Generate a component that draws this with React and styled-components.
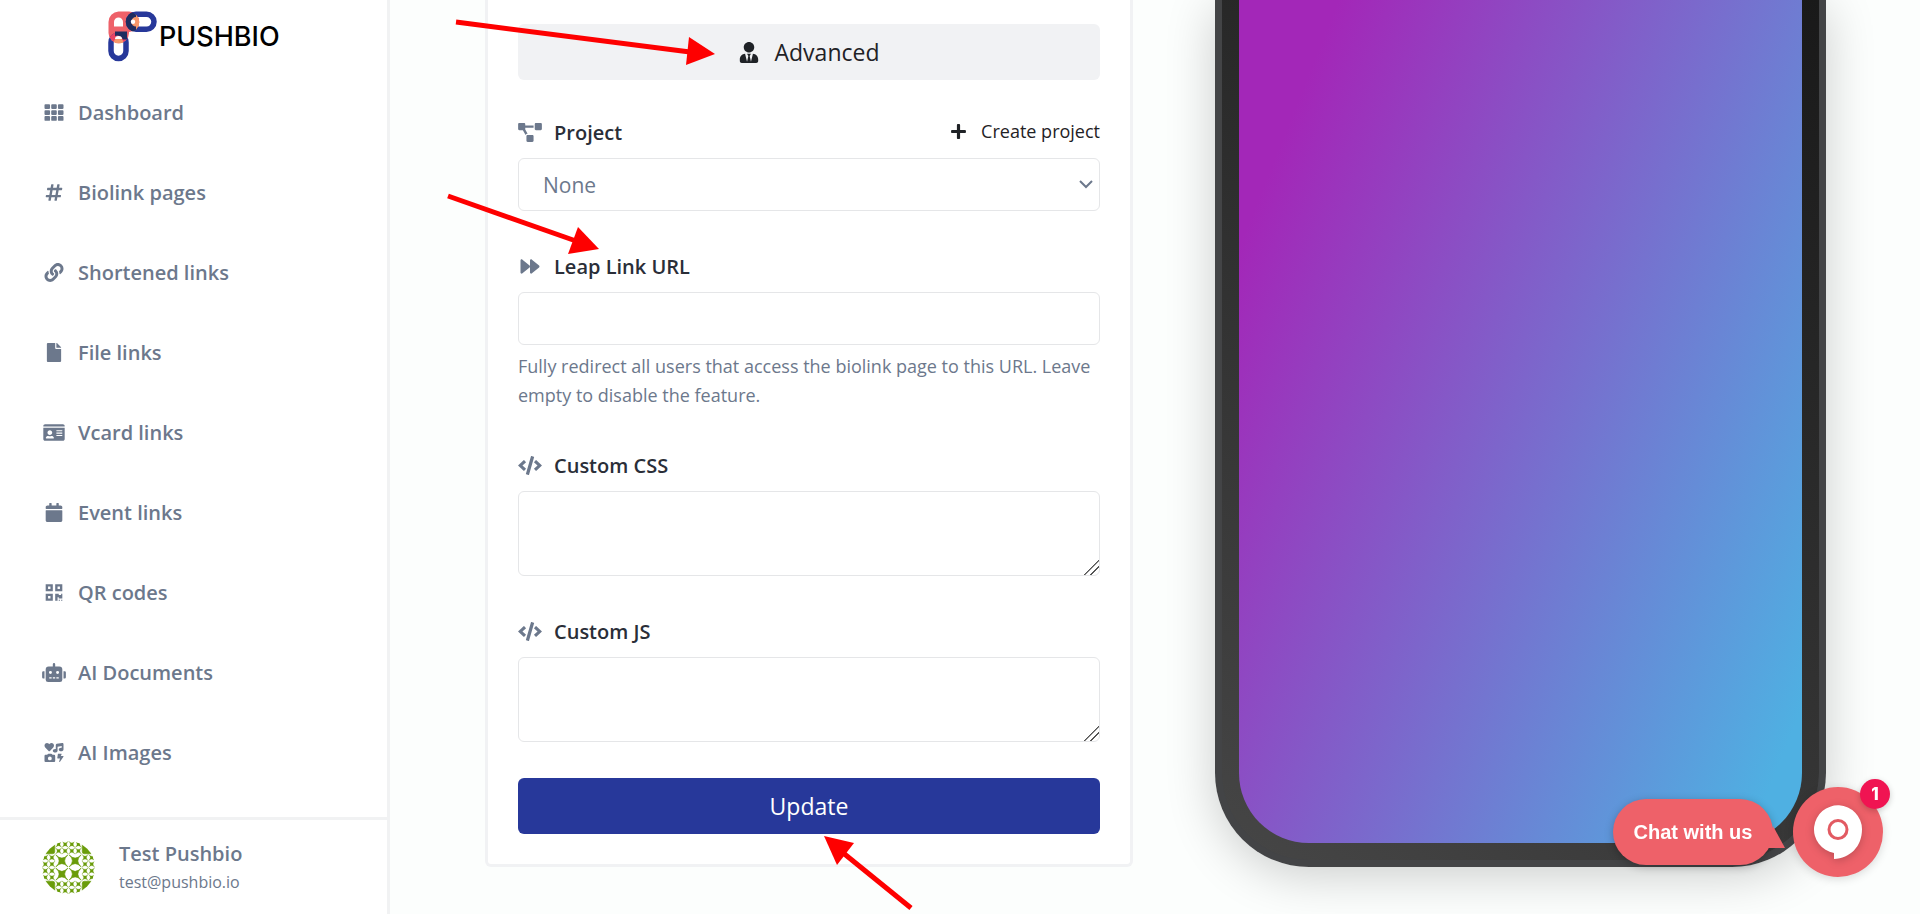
import React from 'react';
import styled, { createGlobalStyle } from 'styled-components';
import {
  FaCalendar,
  FaCode,
  FaFile,
  FaForward,
  FaHashtag,
  FaIcons,
  FaIdCard,
  FaLink,
  FaPlus,
  FaProjectDiagram,
  FaQrcode,
  FaRobot,
  FaTh,
  FaUserTie,
} from 'react-icons/fa';

const GlobalStyle = createGlobalStyle`
  *, *::before, *::after {
    box-sizing: border-box;
  }
  body {
    margin: 0;
    background-color: #fcfefd;
    color: #2a2e38;
    font-family: "Segoe UI", "Open Sans", "Noto Sans", sans-serif;
    font-size: 20px;
  }
  input, select, textarea, button {
    font-family: inherit;
  }
`;

const Page = styled.div`
  display: grid;
  grid-template-columns: 390px minmax(0, 1fr);
  height: 100vh;
  overflow: hidden;
`;

const Sidebar = styled.aside`
  display: flex;
  flex-direction: column;
  background-color: white;
  border-right: 3px solid #f1f2f3;
`;

const Brand = styled.a`
  display: flex;
  align-items: center;
  gap: 1px;
  height: 72px;
  padding-left: 107px;
  color: black;
  font-family: Inter, sans-serif;
  font-size: 27px;
  font-weight: 500;
  text-decoration: none;
`;

const Nav = styled.nav`
  flex: 1;
  display: grid;
  grid-auto-rows: 1fr;
  padding-bottom: 24px;
`;

const NavLink = styled.a`
  display: flex;
  align-items: center;
  gap: 12px;
  padding-left: 42px;
  color: #6c788c;
  font-weight: 600;
  text-decoration: none;
`;

const Icon = styled.span`
  display: flex;
  flex-shrink: 0;
  color: ${props => props.$color || '#6c788c'};
  svg {
    width: ${props => props.$width || '24px'};
    height: ${props => props.$size || '19px'};
  }
`;

const User = styled.a`
  display: flex;
  align-items: center;
  gap: 24px;
  height: 97px;
  padding-left: 42px;
  border-top: 3px solid #f1f2f3;
  color: #6c788c;
  text-decoration: none;
`;

const UserName = styled.div`
  font-weight: 600;
  line-height: 30px;
`;

const UserMail = styled.div`
  font-size: 16px;
  line-height: 26px;
`;

const Main = styled.main`
  position: relative;
  display: grid;
  grid-template-columns: 35fr 33fr;
  column-gap: 82px;
  align-content: start;
  padding: 0 94px 0 95px;
`;

const Card = styled.form`
  padding: 24px 30px 30px;
  background-color: white;
  border: 3px solid #f1f2f4;
  border-top: none;
  border-radius: 0 0 6px 6px;
`;

const Button = styled.button`
  display: flex;
  align-items: center;
  justify-content: center;
  gap: 16px;
  width: 100%;
  height: 56px;
  border: none;
  border-radius: 6px;
  background-color: ${props => (props.$primary ? '#27389a' : '#f1f2f4')};
  color: ${props => (props.$primary ? 'white' : '#1f2226')};
  font-size: 23px;
  cursor: pointer;
`;

const Group = styled.div`
  margin: ${props => (props.$first ? '36px' : '39px')} 0 0;
`;

const Actions = styled.div`
  margin-top: 36px;
`;

const LabelRow = styled.div`
  display: flex;
  justify-content: space-between;
  height: 33px;
  margin-bottom: 9px;
`;

const Label = styled.label`
  display: flex;
  align-items: center;
  gap: 12px;
  font-weight: 600;
`;

const CreateLink = styled.a`
  display: flex;
  align-items: center;
  gap: 14px;
  height: 30px;
  color: #1f2226;
  font-size: 18px;
  text-decoration: none;
`;

const SelectBox = styled.div`
  position: relative;
  svg {
    position: absolute;
    top: 22px;
    right: 7px;
    pointer-events: none;
  }
`;

const Select = styled.select`
  display: block;
  width: 100%;
  height: 53px;
  padding: 0 24px;
  appearance: none;
  background-color: white;
  border: 1px solid #e5e6e8;
  border-radius: 6px;
  color: #6c788c;
  font-size: 21px;
`;

const Input = styled.input`
  display: block;
  width: 100%;
  height: 53px;
  padding: 0 24px;
  border: 1px solid #e5e6e8;
  border-radius: 6px;
  font-size: 21px;
`;

const TextArea = styled.textarea`
  display: block;
  width: 100%;
  height: 85px;
  padding: 12px 24px;
  border: 1px solid #e5e6e8;
  border-radius: 6px;
  font-size: 21px;
  resize: vertical;
  &::-webkit-resizer {
    background: linear-gradient(
      135deg,
      transparent 47%,
      #555 48%,
      #555 53%,
      transparent 54%,
      transparent 69%,
      #555 70%,
      #555 75%,
      transparent 76%
    );
  }
`;

const Help = styled.p`
  margin: 7px 0 0;
  color: #6c788c;
  font-size: 18px;
  line-height: 29px;
`;

const Phone = styled.div`
  display: flex;
  padding: 0 17px 17px;
  border: 7px solid #434446;
  border-top: none;
  border-radius: 0 0 94px 94px;
  background:
    linear-gradient(35deg, #464646, #191919) padding-box,
    linear-gradient(#434446, #434446) border-box;
  box-shadow: 0 8px 50px rgba(0, 0, 0, 0.2);
`;

const Screen = styled.div`
  flex: 1;
  border-radius: 0 0 70px 70px;
  background: linear-gradient(112deg, #a327b8 11%, #4fb0e2 94%);
`;

const Arrow = styled.svg`
  position: absolute;
  top: 0;
  left: 0;
  overflow: visible;
  pointer-events: none;
  line {
    stroke: #fe0000;
    stroke-width: 5;
  }
  polygon {
    fill: #fe0000;
  }
`;

const Chat = styled.div`
  position: fixed;
  right: 37px;
  bottom: 37px;
  display: flex;
  align-items: center;
  gap: 20px;
`;

const ChatText = styled.button`
  position: relative;
  width: 160px;
  height: 66px;
  padding: 0;
  border: none;
  border-radius: 33px;
  background-color: #ee6169;
  box-shadow: 0 2px 8px rgba(0, 0, 0, 0.25);
  color: white;
  font-family: "Liberation Sans", Arial, sans-serif;
  font-size: 20px;
  font-weight: 700;
  svg {
    position: absolute;
    right: -12px;
    bottom: 17px;
  }
`;

const ChatButton = styled.button`
  position: relative;
  width: 90px;
  height: 90px;
  padding: 0;
  border: none;
  border-radius: 50%;
  background-color: #ee6169;
  box-shadow: 0 2px 10px rgba(0, 0, 0, 0.15);
  & > svg {
    display: block;
    filter: drop-shadow(0 2px 4px rgba(0, 0, 0, 0.2));
  }
`;

const Badge = styled.span`
  position: absolute;
  top: -8px;
  right: -7px;
  width: 30px;
  height: 30px;
  border-radius: 50%;
  background-color: #f01452;
  box-shadow: 0 2px 6px rgba(0, 0, 0, 0.2);
  color: white;
  font-family: Inter, sans-serif;
  font-size: 17px;
  font-weight: 800;
  line-height: 31px;
  text-align: center;
`;

const LogoMark = () => (
  <svg width="51" height="51" viewBox="0 0 51 51" aria-hidden="true">
    <defs>
      <clipPath id="logo-red">
        <path d="M11.5 1H22a10.25 10.25 0 0 1 0 20.5V22a10.25 10.25 0 0 1-20.5 0V11.500A10.400 10.400 0 0 1 11.5 1Z" />
      </clipPath>
    </defs>
    <path
      fill="#ee6169"
      fillRule="evenodd"
      d="M11.5 .5H22a10.25 10.25 0 0 1 0 20.500V22a10.25 10.25 0 0 1-20.5 0V11A10.400 10.400 0 0 1 11.5 .5ZM11.500 6.500a4.500 4.500 0 0 0-4.500 4.500V15.500H16V11A4.500 4.500 0 0 0 11.500 6.500Z"
    />
    <rect x="21.500" y="3.300" width="25.500" height="15" rx="7.500" fill="none" stroke="#27389a" strokeWidth="5.500" />
    <rect x="4" y="24" width="15" height="23.500" rx="7.500" fill="none" stroke="#27389a" strokeWidth="5.500" />
    <g clipPath="url(#logo-red)">
      <rect x="21.500" y="3.300" width="25.500" height="15" rx="7.500" fill="#f7976b" stroke="#1f2d60" strokeWidth="5.500" />
      <path d="M29 0a12 12 0 0 1 0 22Z" fill="#f7976b" />
      <rect x="4" y="24" width="15" height="23.500" rx="7.500" fill="#f7976b" stroke="#ea4463" strokeWidth="5.500" />
      <path d="M8 20.500H20V28.500H16A6 6 0 0 0 8 25Z" fill="#1f2d60" />
      <circle cx="26" cy="10.800" r="2.200" fill="#fff" />
      <path d="M8 28a3.500 3 0 0 1 7 0Z" fill="#fff" />
    </g>
  </svg>
);

const STAR =
  'M0.600 0.600Q6.500 7 12.400 0.600Q6 6.500 12.400 12.400Q6.500 6 0.600 12.400Q7 6.500 0.600 0.600Z';

const Avatar = () => {
  const cells = [];
  for (let row = 0; row < 4; row++) {
    for (let col = 0; col < 4; col++) {
      const x = col * 13;
      const y = row * 13;
      const edgeX = col === 0 || col === 3;
      const edgeY = row === 0 || row === 3;
      const key = `${row}-${col}`;
      if (edgeX && edgeY) {
        cells.push(<rect key={key} x={x + 0.5} y={y + 0.5} width="12" height="12" rx="2" />);
      } else if (edgeX || edgeY) {
        [0, 6.5].forEach(dx =>
          [0, 6.5].forEach(dy => {
            cells.push(
              <path
                key={`${key}-${dx}-${dy}`}
                d={STAR}
                transform={`translate(${x + dx} ${y + dy}) scale(0.5)`}
              />
            );
          })
        );
      } else {
        cells.push(<path key={key} d={STAR} transform={`translate(${x} ${y})`} />);
      }
    }
  }
  return (
    <svg width="53" height="53" viewBox="0 0 52 52" aria-hidden="true">
      <clipPath id="avatar-round">
        <circle cx="26" cy="26" r="26" />
      </clipPath>
      <g clipPath="url(#avatar-round)" fill="#6a9c0a" stroke="#6a9c0a" strokeWidth="0.600">
        {cells}
      </g>
    </svg>
  );
};

const links = [
  { text: 'Dashboard', icon: FaTh },
  { text: 'Biolink pages', icon: FaHashtag },
  { text: 'Shortened links', icon: FaLink },
  { text: 'File links', icon: FaFile },
  { text: 'Vcard links', icon: FaIdCard },
  { text: 'Event links', icon: FaCalendar },
  { text: 'QR codes', icon: FaQrcode },
  { text: 'AI Documents', icon: FaRobot },
  { text: 'AI Images', icon: FaIcons },
];

const App = () => {
  return (
    <Page>
      <GlobalStyle />
      <Sidebar>
        <Brand href="#">
          <LogoMark />
          PUSHBIO
        </Brand>
        <Nav>
          {links.map(({ text, icon: LinkIcon }) => (
            <NavLink href="#" key={text}>
              <Icon><LinkIcon /></Icon>
              {text}
            </NavLink>
          ))}
        </Nav>
        <User href="#">
          <Avatar />
          <div>
            <UserName>Test Pushbio</UserName>
            <UserMail>test@pushbio.io</UserMail>
          </div>
        </User>
      </Sidebar>

      <Main>
        <Card onSubmit={e => e.preventDefault()}>
          <Button type="button">
            <Icon $color="#1f2226" $size="21px" $width="20px"><FaUserTie /></Icon>
            Advanced
          </Button>

          <Group $first>
            <LabelRow>
              <Label htmlFor="project">
                <Icon><FaProjectDiagram /></Icon>
                Project
              </Label>
              <CreateLink href="#">
                <Icon $color="#1f2226" $size="17px" $width="17px"><FaPlus /></Icon>
                Create project
              </CreateLink>
            </LabelRow>
            <SelectBox>
              <Select id="project">
                <option>None</option>
              </Select>
              <svg width="14" height="9" viewBox="0 0 14 9" aria-hidden="true">
                <path d="M1 1l6 6 6-6" fill="none" stroke="#6c788c" strokeWidth="2" />
              </svg>
            </SelectBox>
          </Group>

          <Group>
            <LabelRow>
              <Label htmlFor="leap">
                <Icon><FaForward /></Icon>
                Leap Link URL
              </Label>
            </LabelRow>
            <Input id="leap" type="text" />
            <Help>
              Fully redirect all users that access the biolink page to this URL. Leave
              empty to disable the feature.
            </Help>
          </Group>

          <Group>
            <LabelRow>
              <Label htmlFor="css">
                <Icon><FaCode /></Icon>
                Custom CSS
              </Label>
            </LabelRow>
            <TextArea id="css" />
          </Group>

          <Group>
            <LabelRow>
              <Label htmlFor="js">
                <Icon><FaCode /></Icon>
                Custom JS
              </Label>
            </LabelRow>
            <TextArea id="js" />
          </Group>

          <Actions>
            <Button type="submit" $primary>Update</Button>
          </Actions>
        </Card>

        <Phone>
          <Screen />
        </Phone>

        <Arrow width="1" height="1" aria-hidden="true">
          <line x1="66" y1="22" x2="300" y2="52" />
          <polygon points="325,54 299,37 296,65" />
          <line x1="58" y1="196" x2="186" y2="241" />
          <polygon points="209,249 188,227 178,254" />
          <line x1="521" y1="908" x2="452" y2="852" />
          <polygon points="434,836 464,843 447,865" />
        </Arrow>
      </Main>

      <Chat>
        <ChatText type="button">
          Chat with us
          <svg width="18" height="22" viewBox="0 0 18 22" aria-hidden="true">
            <path d="M6 0l12 22H0Z" fill="#ee6169" />
          </svg>
        </ChatText>
        <ChatButton type="button" aria-label="Open chat">
          <svg width="90" height="90" viewBox="0 0 90 90" aria-hidden="true">
            <path d="M41 72V66A24 24 0 1 1 69 42C69 60 57 71 41 72Z" fill="#fff" />
            <circle cx="45" cy="42.500" r="9" fill="#fff" stroke="#e25a62" strokeWidth="3" />
          </svg>
          <Badge>1</Badge>
        </ChatButton>
      </Chat>
    </Page>
  );
};

export default App;
